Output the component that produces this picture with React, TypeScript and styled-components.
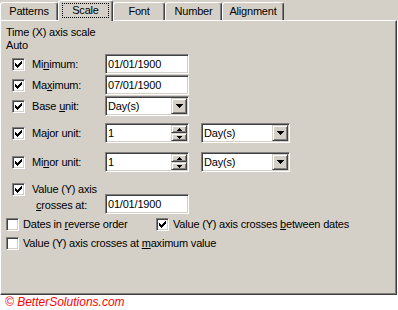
import styled, { createGlobalStyle } from "styled-components";

const face = "#d4d0c8";
const shadow = "#808080";
const dark = "#404040";

const GlobalStyle = createGlobalStyle`
    html, body {
        margin: 0;
        padding: 0;
        background: #fff;
    }
    body {
        font-family: "Liberation Sans", Arial, sans-serif;
        font-size: 11px;
        letter-spacing: -0.2px;
        color: #000;
    }
`;

const tabs = [
    { label: "Patterns", width: 58 },
    { label: "Scale", width: 55, active: true },
    { label: "Font", width: 52 },
    { label: "Number", width: 57 },
    { label: "Alignment", width: 62 },
];

const CheckMark = () => (
    <svg width="7" height="7" viewBox="0 0 7 7" shapeRendering="crispEdges">
        <path d="M6 0h1v3H6zM5 1h1v3H5zM4 2h1v3H4zM0 2h1v3H0zM1 3h1v3H1zM3 3h1v3H3zM2 4h1v3H2z" fill="#000" />
    </svg>
);

const ArrowDown = () => (
    <svg width="7" height="4" viewBox="0 0 7 4" shapeRendering="crispEdges">
        <path d="M0 0h7v1H0zM1 1h5v1H1zM2 2h3v1H2zM3 3h1v1H3z" fill="#000" />
    </svg>
);

const SpinArrow = ({ up }: { up?: boolean }) => (
    <svg width="5" height="3" viewBox="0 0 5 3" shapeRendering="crispEdges">
        {up ? (
            <path d="M2 0h1v1H2zM1 1h3v1H1zM0 2h5v1H0z" fill="#000" />
        ) : (
            <path d="M0 0h5v1H0zM1 1h3v1H1zM2 2h1v1H2z" fill="#000" />
        )}
    </svg>
);

const Check = ({ on }: { on?: boolean }) => <CheckBox>{on && <CheckMark />}</CheckBox>;

const DropField = ({ w, value }: { w: number; value: string }) => (
    <Field $w={w}>
        <FieldText>{value}</FieldText>
        <DropButton>
            <ArrowDown />
        </DropButton>
    </Field>
);

const SpinField = ({ value }: { value: string }) => (
    <Field $w={84}>
        <FieldText>{value}</FieldText>
        <SpinStack>
            <SpinButton>
                <SpinArrow up />
            </SpinButton>
            <SpinButton>
                <SpinArrow />
            </SpinButton>
        </SpinStack>
    </Field>
);

const App = () => {
    return (
        <Screen>
            <GlobalStyle />
            <TabStrip>
                {tabs.map((t) => (
                    <Tab key={t.label} $w={t.width} $active={t.active}>
                        {t.active ? <Focus>{t.label}</Focus> : t.label}
                    </Tab>
                ))}
            </TabStrip>
            <Panel>
                <Line>Time (X) axis scale</Line>
                <Line>Auto</Line>
                <Options>
                    <OptRow $mt={0}>
                        <Check on />
                        <Label>Mi<u>n</u>imum:</Label>
                        <Field $w={84}>
                            <FieldText>01/01/1900</FieldText>
                        </Field>
                    </OptRow>
                    <OptRow $mt={1}>
                        <Check on />
                        <Label>Ma<u>x</u>imum:</Label>
                        <Field $w={84}>
                            <FieldText>07/01/1900</FieldText>
                        </Field>
                    </OptRow>
                    <OptRow $mt={1}>
                        <Check on />
                        <Label>Base <u>u</u>nit:</Label>
                        <DropField w={84} value="Day(s)" />
                    </OptRow>
                    <OptRow $mt={7}>
                        <Check on />
                        <Label>Ma<u>j</u>or unit:</Label>
                        <SpinField value="1" />
                        <Spacer />
                        <DropField w={89} value="Day(s)" />
                    </OptRow>
                    <OptRow $mt={9}>
                        <Check on />
                        <Label>Mi<u>n</u>or unit:</Label>
                        <SpinField value="1" />
                        <Spacer />
                        <DropField w={89} value="Day(s)" />
                    </OptRow>
                    <CrossBlock>
                        <CrossLabels>
                            <CrossFirst>
                                <Check on />
                                <Label>Value (Y) axis</Label>
                            </CrossFirst>
                            <CrossSecond>
                                <u>c</u>rosses at:
                            </CrossSecond>
                        </CrossLabels>
                        <Field $w={84}>
                            <FieldText>01/01/1900</FieldText>
                        </Field>
                    </CrossBlock>
                </Options>
                <Flags>
                    <FlagRow $mt={4}>
                        <FlagItem $w={150}>
                            <Check />
                            <FlagText>Dates in <u>r</u>everse order</FlagText>
                        </FlagItem>
                        <FlagItem>
                            <Check on />
                            <FlagText>Value (Y) axis crosses <u>b</u>etween dates</FlagText>
                        </FlagItem>
                    </FlagRow>
                    <FlagRow $mt={6}>
                        <FlagItem>
                            <Check />
                            <FlagText>Value (Y) axis crosses at <u>m</u>aximum value</FlagText>
                        </FlagItem>
                    </FlagRow>
                </Flags>
            </Panel>
            <Footer>© BetterSolutions.com</Footer>
        </Screen>
    );
};

export default App;

const Screen = styled.div`
    width: 398px;
    height: 310px;
    background: #fff;
    overflow: hidden;
`;

const TabStrip = styled.div`
    display: flex;
    align-items: flex-end;
    height: 20px;
    background: ${face};
    position: relative;
    z-index: 1;
`;

const Tab = styled.div<{ $w: number; $active?: boolean }>`
    box-sizing: border-box;
    flex: none;
    width: ${(p) => p.$w}px;
    height: ${(p) => (p.$active ? 21 : 18)}px;
    margin-bottom: ${(p) => (p.$active ? -1 : 0)}px;
    padding-bottom: ${(p) => (p.$active ? 1 : 0)}px;
    background: ${face};
    border-top: 1px solid #fff;
    border-left: 1px solid #fff;
    border-right: 1px solid ${dark};
    border-radius: 3px 3px 0 0;
    box-shadow: inset -1px 0 0 ${shadow};
    display: flex;
    align-items: center;
    justify-content: center;
    line-height: 13px;
    white-space: nowrap;
`;

const Focus = styled.span`
    border: 1px dotted #000;
    padding: 0 9px;
    line-height: 13px;
`;

const Panel = styled.div`
    box-sizing: border-box;
    width: 397px;
    height: 275px;
    background: ${face};
    border-top: 1px solid #fff;
    border-left: 1px solid #fff;
    border-right: 1px solid ${dark};
    border-bottom: 1px solid ${dark};
    box-shadow: inset -1px -1px 0 ${shadow};
    padding: 5px 0 0 4px;
    display: flex;
    flex-direction: column;
`;

const Line = styled.div`
    line-height: 13px;
    padding-left: 1px;
    white-space: nowrap;
`;

const Options = styled.div`
    display: flex;
    flex-direction: column;
    padding-left: 7px;
    margin-top: 2px;
`;

const OptRow = styled.div<{ $mt: number }>`
    display: flex;
    align-items: center;
    height: 20px;
    margin-top: ${(p) => p.$mt}px;
`;

const Label = styled.span`
    width: 73px;
    margin-left: 7px;
    line-height: 13px;
    white-space: nowrap;
`;

const Spacer = styled.span`
    width: 12px;
    flex: none;
`;

const CheckBox = styled.span`
    box-sizing: border-box;
    flex: none;
    width: 13px;
    height: 13px;
    background: #fff;
    border: 1px solid;
    border-color: ${shadow} #fff #fff ${shadow};
    box-shadow: inset 1px 1px 0 ${dark}, inset -1px -1px 0 ${face};
    display: flex;
    align-items: center;
    justify-content: center;
    svg {
        display: block;
    }
`;

const Field = styled.div<{ $w: number }>`
    box-sizing: border-box;
    flex: none;
    width: ${(p) => p.$w}px;
    height: 20px;
    background: #fff;
    border: 1px solid;
    border-color: ${shadow} #fff #fff ${shadow};
    box-shadow: inset 1px 1px 0 ${dark}, inset -1px -1px 0 ${face};
    display: flex;
    align-items: center;
    padding: 0 1px 0 2px;
`;

const FieldText = styled.span`
    flex: 1;
    line-height: 13px;
    white-space: nowrap;
`;

const raised = `
    box-sizing: border-box;
    background: ${face};
    border: 1px solid;
    border-color: ${face} ${dark} ${dark} ${face};
    box-shadow: inset 1px 1px 0 #fff, inset -1px -1px 0 ${shadow};
    display: flex;
    align-items: center;
    justify-content: center;
    svg {
        display: block;
    }
`;

const DropButton = styled.span`
    ${raised}
    flex: none;
    width: 16px;
    height: 16px;
`;

const SpinStack = styled.span`
    flex: none;
    display: flex;
    flex-direction: column;
    width: 16px;
    height: 16px;
`;

const SpinButton = styled.span`
    ${raised}
    width: 16px;
    height: 8px;
`;

const CrossBlock = styled.div`
    display: flex;
    align-items: flex-end;
    margin-top: 11px;
`;

const CrossLabels = styled.div`
    width: 93px;
    display: flex;
    flex-direction: column;
`;

const CrossFirst = styled.div`
    display: flex;
    align-items: center;
    height: 13px;
`;

const CrossSecond = styled.div`
    line-height: 13px;
    margin: 3px 0 2px 24px;
    white-space: nowrap;
`;

const Flags = styled.div`
    display: flex;
    flex-direction: column;
    padding-left: 1px;
`;

const FlagRow = styled.div<{ $mt: number }>`
    display: flex;
    align-items: center;
    height: 13px;
    margin-top: ${(p) => p.$mt}px;
`;

const FlagItem = styled.div<{ $w?: number }>`
    display: flex;
    align-items: center;
    gap: 4px;
    ${(p) => (p.$w ? `width: ${p.$w}px; flex: none;` : "")}
`;

const FlagText = styled.span`
    line-height: 13px;
    white-space: nowrap;
`;

const Footer = styled.div`
    padding-left: 5px;
    line-height: 14px;
    font-family: "Liberation Sans", Arial, sans-serif;
    font-size: 12px;
    font-style: italic;
    letter-spacing: 0;
    color: #f00;
`;
